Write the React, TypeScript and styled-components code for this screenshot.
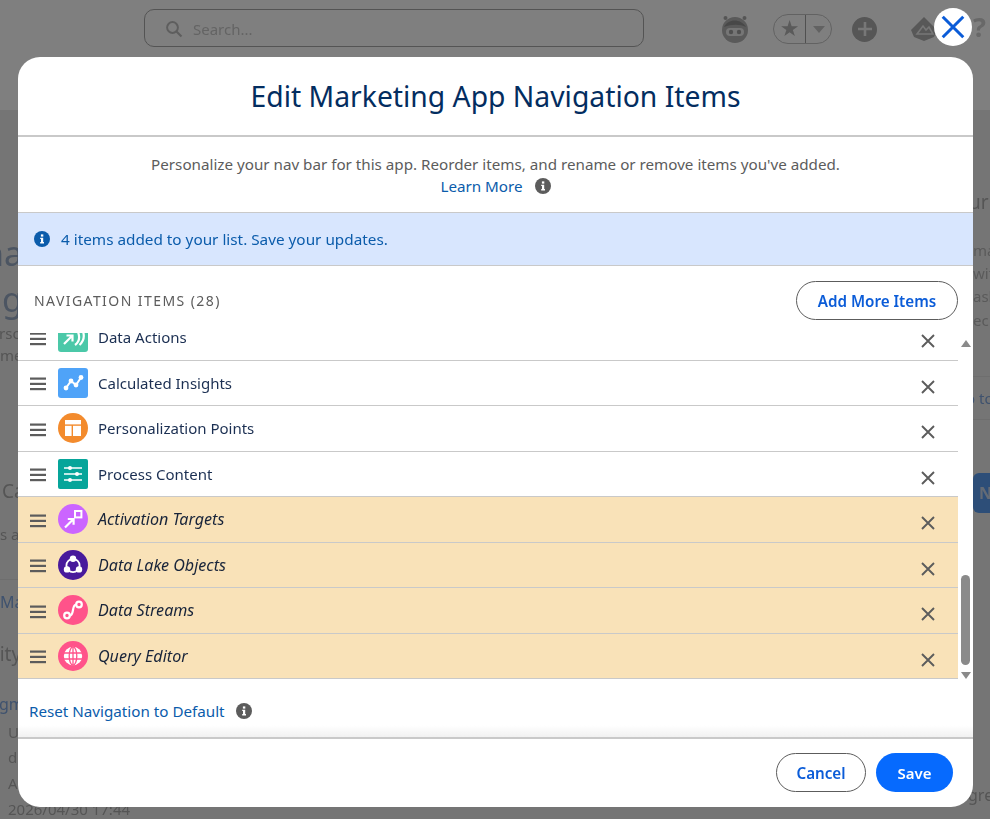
import React from "react";
import styled, { createGlobalStyle } from "styled-components";

const FONT = `"Noto Sans", "Open Sans", "Liberation Sans", sans-serif`;

const GlobalStyle = createGlobalStyle`
  html, body {
    margin: 0;
    padding: 0;
    height: 100%;
    overflow: hidden;
    font-family: ${FONT};
  }
  * { box-sizing: border-box; }
`;

const Hamburger = () => (
  <svg width="16" height="14" viewBox="0 0 16 14">
    <rect y="0.5" width="16" height="2.2" fill="currentColor" />
    <rect y="5.8" width="16" height="2.2" fill="currentColor" />
    <rect y="11" width="16" height="2.2" fill="currentColor" />
  </svg>
);

const Cross = ({ size = 14, color = "currentColor", weight = 1.9 }: { size?: number; color?: string; weight?: number }) => (
  <svg width={size} height={size} viewBox="0 0 14 14">
    <path d="M1 1 L13 13 M13 1 L1 13" stroke={color} strokeWidth={weight} fill="none" />
  </svg>
);

const InfoDot = ({ color }: { color: string }) => (
  <svg width="16" height="16" viewBox="0 0 16 16">
    <circle cx="8" cy="8" r="8" fill={color} />
    <rect x="6.9" y="3.4" width="2.4" height="2.2" fill="#fff" />
    <path d="M6.2 6.7 H9.2 V11 H10 V12.4 H6.2 V11 H7 V8 H6.2 Z" fill="#fff" />
  </svg>
);

const DataActionsIcon = () => (
  <svg width="30" height="30" viewBox="0 0 30 30">
    <rect width="30" height="30" rx="3" fill="#4bc8a8" />
    <path d="M6 22 L14 14 M8.5 13.5 H14.5 V19.5" stroke="#fff" strokeWidth="2.2" fill="none" />
    <path d="M17 23 C21 20 22 15 20 10 M21.5 23 C26 19 26.5 13 24.5 8" stroke="#fff" strokeWidth="2.2" fill="none" />
  </svg>
);

const InsightsIcon = () => (
  <svg width="30" height="30" viewBox="0 0 30 30">
    <rect width="30" height="30" rx="3" fill="#4fa3f8" />
    <path d="M8 20 L13 13 L18 17 L23 9.5" stroke="#fff" strokeWidth="2" fill="none" />
    <circle cx="8" cy="20" r="2.4" fill="#fff" />
    <circle cx="13" cy="13" r="2.4" fill="#fff" />
    <circle cx="18" cy="17" r="2.4" fill="#fff" />
    <circle cx="23" cy="9.5" r="2.4" fill="#fff" />
  </svg>
);

const PersonalizationIcon = () => (
  <svg width="30" height="30" viewBox="0 0 30 30">
    <circle cx="15" cy="15" r="15" fill="#f38b2d" />
    <rect x="7" y="7" width="16" height="4.4" fill="#fff" />
    <rect x="7" y="12.8" width="6.6" height="10.2" fill="#fff" />
    <rect x="15" y="12.8" width="8" height="10.2" fill="#fff" />
  </svg>
);

const ProcessIcon = () => (
  <svg width="30" height="30" viewBox="0 0 30 30">
    <rect width="30" height="30" rx="2" fill="#06a59a" />
    <path d="M6 9 H24 M6 15 H24 M6 21 H24" stroke="#fff" strokeWidth="1.5" />
    <circle cx="12" cy="9" r="2" fill="#fff" />
    <circle cx="19" cy="15" r="2" fill="#fff" />
    <circle cx="12" cy="21" r="2" fill="#fff" />
  </svg>
);

const ActivationIcon = () => (
  <svg width="30" height="30" viewBox="0 0 30 30">
    <circle cx="15" cy="15" r="15" fill="#cb65ff" />
    <rect x="17" y="7" width="6.4" height="6.4" fill="none" stroke="#fff" strokeWidth="2" />
    <path d="M7 23.5 L15 15.5 M9.8 15 H15.6 V20.8" stroke="#fff" strokeWidth="2.2" fill="none" />
  </svg>
);

const DataLakeIcon = () => (
  <svg width="30" height="30" viewBox="0 0 30 30">
    <circle cx="15" cy="15" r="15" fill="#481a9c" />
    <circle cx="15" cy="15.5" r="6.6" fill="none" stroke="#fff" strokeWidth="1.8" />
    <circle cx="15" cy="8.8" r="3.2" fill="#fff" />
    <circle cx="9" cy="19.4" r="3.2" fill="#fff" />
    <circle cx="21" cy="19.4" r="3.2" fill="#fff" />
  </svg>
);

const StreamsIcon = () => (
  <svg width="30" height="30" viewBox="0 0 30 30">
    <circle cx="15" cy="15" r="15" fill="#ff538a" />
    <circle cx="9" cy="20.5" r="2.8" fill="none" stroke="#fff" strokeWidth="2.2" />
    <circle cx="21" cy="9.5" r="2.8" fill="none" stroke="#fff" strokeWidth="2.2" />
    <path d="M11.8 20.5 C16.5 20.5 13.5 9.5 18.2 9.5" stroke="#fff" strokeWidth="2.2" fill="none" />
  </svg>
);

const QueryIcon = () => (
  <svg width="30" height="30" viewBox="0 0 30 30">
    <circle cx="15" cy="15" r="15" fill="#ff538a" />
    <circle cx="15" cy="15" r="9.2" fill="#fff" />
    <ellipse cx="15" cy="15" rx="3.8" ry="9.2" fill="none" stroke="#ff538a" strokeWidth="1.3" />
    <path d="M15 5.8 V24.2 M6 12 H24 M6 18 H24" stroke="#ff538a" strokeWidth="1.3" />
  </svg>
);

const navItems = [
  { label: "Data Actions", icon: <DataActionsIcon />, added: false },
  { label: "Calculated Insights", icon: <InsightsIcon />, added: false },
  { label: "Personalization Points", icon: <PersonalizationIcon />, added: false },
  { label: "Process Content", icon: <ProcessIcon />, added: false },
  { label: "Activation Targets", icon: <ActivationIcon />, added: true },
  { label: "Data Lake Objects", icon: <DataLakeIcon />, added: true },
  { label: "Data Streams", icon: <StreamsIcon />, added: true },
  { label: "Query Editor", icon: <QueryIcon />, added: true },
];

const leftRows = [
  { text: "na", top: 120, h: 46, size: 34, x: -17, color: "#98aac4" },
  { text: "ng", top: 0, h: 46, size: 34, x: -19, color: "#98aac4" },
  { text: "rso", top: 0, h: 21, size: 15, x: -1, color: "#aaa" },
  { text: "me", top: 0, h: 24, size: 15, x: 0, color: "#aaa" },
  { text: "Ca", top: 108, h: 32, size: 19, x: 2, color: "#aaa" },
  { text: "s a", top: 15, h: 24, size: 15, x: 0, color: "#aaa" },
  { text: "Ma", top: 33, h: 44, size: 16, x: 0, color: "#7ea4dc", line: true },
  { text: "vity", top: 15, h: 32, size: 19, x: -10, color: "#aaa" },
  { text: "gm", top: 22, h: 24, size: 16, x: -1, color: "#7ea4dc" },
  { text: "U", top: 4, h: 24, size: 15, x: 8, color: "#aaa" },
  { text: "d", top: 0, h: 26, size: 15, x: 8, color: "#aaa" },
  { text: "A", top: 0, h: 26, size: 15, x: 8, color: "#aaa" },
  { text: "2026/04/30 17:44", top: 0, h: 26, size: 15, x: 8, color: "#aaa" },
];

const rightRows = [
  { text: "sur", top: 76, h: 32, size: 19, x: 0, color: "#aaa" },
  { text: "mat", top: 20, h: 23, size: 15, x: 13, color: "#b4b4b4" },
  { text: "with", top: 0, h: 23, size: 15, x: 13, color: "#b4b4b4" },
  { text: "ash", top: 0, h: 23, size: 15, x: 13, color: "#b4b4b4" },
  { text: "eci", top: 0, h: 26, size: 15, x: 13, color: "#b4b4b4" },
  { text: "o to", top: 43, h: 43, size: 15, x: 6, color: "#7ea4dc", line: true },
  { text: "", top: 0, h: 54, size: 15, x: 0, color: "#b4b4b4", line: true },
];

const App = () => {
  return (
    <>
      <GlobalStyle />
      <Page>
        <TopBar>
          <SearchBox>
            <svg width="18" height="18" viewBox="0 0 18 18">
              <circle cx="7.5" cy="7.5" r="5.4" fill="none" stroke="#bdbdbd" strokeWidth="2" />
              <path d="M11.5 11.5 L16.5 16.5" stroke="#bdbdbd" strokeWidth="2.2" />
            </svg>
            <span>Search...</span>
          </SearchBox>
          <Actions>
            <svg width="30" height="28" viewBox="0 0 30 28">
              <circle cx="5.5" cy="3" r="2" fill="#ababab" />
              <circle cx="24.5" cy="3" r="2" fill="#ababab" />
              <circle cx="15" cy="15" r="13" fill="#b4b4b4" />
              <path d="M4 12 C8 4 20 3 26 12 C20 9 12 9 4 12 Z" fill="#909090" />
              <rect x="6" y="13" width="18" height="8" rx="4" fill="#ececec" />
              <circle cx="11" cy="17" r="2.2" fill="#a0a0a0" />
              <circle cx="19" cy="17" r="2.2" fill="#a0a0a0" />
            </svg>
            <Favorites>
              <FavStar>★</FavStar>
              <FavCaret />
            </Favorites>
            <PlusCircle>
              <svg width="14" height="14" viewBox="0 0 14 14">
                <path d="M7 0 V14 M0 7 H14" stroke="#eee" strokeWidth="2.6" />
              </svg>
            </PlusCircle>
            <svg width="28" height="24" viewBox="0 0 28 24">
              <path d="M14 0 L27 13 L24 20 L14 24 L4 20 L1 13 Z" fill="#b0b0b0" />
              <path d="M7 17 L13 9 L16 13 L19 10 L23 17 Z" fill="none" stroke="#eee" strokeWidth="1.6" />
            </svg>
            <HelpMark>?</HelpMark>
          </Actions>
        </TopBar>
        <Content>
          <Column>
            {leftRows.map((r) => (
              <BackRow key={r.text} $top={r.top} $h={r.h} $size={r.size} $x={r.x} $color={r.color} $line={r.line}>
                {r.text}
              </BackRow>
            ))}
          </Column>
          <Column>
            {rightRows.map((r, i) => (
              <BackRow key={i} $top={r.top} $h={r.h} $size={r.size} $x={r.x} $color={r.color} $line={r.line}>
                {r.text}
              </BackRow>
            ))}
            <BackButton>New</BackButton>
            <BackRow $top={270} $h={24} $size={16} $x={8} $color="#aaa">gre</BackRow>
          </Column>
        </Content>
      </Page>
      <Backdrop />
      <Modal>
        <CloseButton aria-label="Close">
          <Cross size={24} color="#0b5cd8" weight={1.75} />
        </CloseButton>
        <ModalHeader>
          <Title>Edit Marketing App Navigation Items</Title>
        </ModalHeader>
        <Intro>
          <div>Personalize your nav bar for this app. Reorder items, and rename or remove items you've added.</div>
          <LearnRow>
            <TextLink>Learn More</TextLink>
            <InfoDot color="#5c5c5c" />
          </LearnRow>
        </Intro>
        <Notice>
          <InfoDot color="#0b5cab" />
          <span>4 items added to your list. Save your updates.</span>
        </Notice>
        <SectionHead>
          <SectionLabel>NAVIGATION ITEMS (28)</SectionLabel>
          <OutlineButton $width={162}>Add More Items</OutlineButton>
        </SectionHead>
        <ListFrame>
          <ListViewport>
            {navItems.map((item) => (
              <NavRow key={item.label} $added={item.added}>
                <Handle><Hamburger /></Handle>
                {item.icon}
                <NavLabel $added={item.added}>{item.label}</NavLabel>
                <RemoveButton aria-label="Remove"><Cross /></RemoveButton>
              </NavRow>
            ))}
          </ListViewport>
          <ScrollTrack>
            <ArrowUp />
            <ScrollThumb />
            <ArrowDown />
          </ScrollTrack>
        </ListFrame>
        <ResetRow>
          <TextLink>Reset Navigation to Default</TextLink>
          <InfoDot color="#5c5c5c" />
        </ResetRow>
        <Footer>
          <OutlineButton $width={90}>Cancel</OutlineButton>
          <PrimaryButton>Save</PrimaryButton>
        </Footer>
      </Modal>
    </>
  );
};
export default App;

const Page = styled.div`
  width: 990px;
  height: 819px;
  overflow: hidden;
  background: #ebebeb;
  filter: blur(0.6px);
`;

const TopBar = styled.div`
  height: 110px;
  padding: 9px 0 0 144px;
  background: #fff;
  display: flex;
  align-items: flex-start;
`;

const SearchBox = styled.div`
  width: 500px;
  height: 38px;
  border: 1px solid #a8a8a8;
  border-radius: 10px;
  display: flex;
  align-items: center;
  gap: 10px;
  padding: 1px 0 0 20px;
  font-size: 15px;
  color: #c8c8c8;
`;

const Actions = styled.div`
  margin-left: 76px;
  height: 40px;
  display: flex;
  align-items: center;
  gap: 23px;
`;

const Favorites = styled.div`
  width: 59px;
  height: 30px;
  border: 1px solid #c4c4c4;
  border-radius: 15px;
  display: flex;
  align-items: center;
  margin-right: -3px;
`;

const FavStar = styled.span`
  width: 31px;
  text-align: center;
  font-size: 22px;
  line-height: 28px;
  color: #b4b4b4;
  font-family: "DejaVu Sans", sans-serif;
`;

const FavCaret = styled.span`
  flex: 1;
  height: 28px;
  border-left: 1px solid #a0a0a0;
  display: flex;
  align-items: center;
  justify-content: center;
  &::after {
    content: "";
    border-left: 6px solid transparent;
    border-right: 6px solid transparent;
    border-top: 7px solid #c4c4c4;
  }
`;

const PlusCircle = styled.span`
  width: 25px;
  height: 25px;
  border-radius: 50%;
  background: #acacac;
  display: flex;
  align-items: center;
  justify-content: center;
  margin-right: 10px;
`;

const HelpMark = styled.span`
  font-size: 27px;
  line-height: 40px;
  font-weight: 700;
  color: #d0d0d0;
  margin: -4px 0 0 12px;
`;

const Content = styled.div`
  display: grid;
  grid-template-columns: 960px 30px;
  height: 709px;
`;

const Column = styled.div`
  display: flex;
  flex-direction: column;
  min-width: 0;
`;

const BackRow = styled.div<{ $top: number; $h: number; $size: number; $x: number; $color: string; $line?: boolean }>`
  margin-top: ${(p) => p.$top}px;
  height: ${(p) => p.$h}px;
  flex-shrink: 0;
  display: flex;
  align-items: center;
  padding-left: ${(p) => Math.max(p.$x, 0)}px;
  margin-left: ${(p) => Math.min(p.$x, 0)}px;
  font-size: ${(p) => p.$size}px;
  color: ${(p) => p.$color};
  white-space: nowrap;
  border-top: ${(p) => (p.$line ? "1px solid #dcdcdc" : "0")};
`;

const BackButton = styled.div`
  margin: 0 0 0 13px;
  height: 40px;
  width: 60px;
  background: #5a9cf0;
  border-radius: 6px 0 0 6px;
  color: #c8d6ea;
  font-weight: 700;
  font-size: 16px;
  line-height: 40px;
  padding-left: 6px;
`;

const Backdrop = styled.div`
  position: fixed;
  inset: 0;
  background: rgba(0, 0, 0, 0.5);
`;

const Modal = styled.div`
  position: fixed;
  left: 18px;
  top: 57px;
  width: 955px;
  height: 750px;
  background: #fff;
  border-radius: 22px;
  display: flex;
  flex-direction: column;
`;

const CloseButton = styled.button`
  position: absolute;
  top: -49px;
  right: 1px;
  width: 38px;
  height: 38px;
  padding: 0;
  border: 0;
  border-radius: 50%;
  background: #fff;
  display: flex;
  align-items: center;
  justify-content: center;
`;

const ModalHeader = styled.div`
  height: 80px;
  flex-shrink: 0;
  border-bottom: 2px solid #c9c9c9;
  display: flex;
  align-items: center;
  justify-content: center;
`;

const Title = styled.h1`
  margin: 0;
  font-size: 28.3px;
  font-weight: 400;
  color: #032d60;
`;

const Intro = styled.div`
  height: 75px;
  flex-shrink: 0;
  padding-top: 16px;
  text-align: center;
  font-size: 15.2px;
  line-height: 22px;
  color: #5c5c5c;
`;

const LearnRow = styled.div`
  display: flex;
  justify-content: center;
  align-items: center;
  gap: 12px;
`;

const TextLink = styled.a`
  font-size: 15.2px;
  color: #0b5cab;
`;

const Notice = styled.div`
  height: 54px;
  flex-shrink: 0;
  background: #d8e6fe;
  border-top: 1px solid #c9c9c9;
  border-bottom: 1px solid #c9c9c9;
  display: flex;
  align-items: center;
  gap: 11px;
  padding-left: 16px;
  font-size: 15.3px;
  color: #0b5cab;
`;

const SectionHead = styled.div`
  height: 67px;
  flex-shrink: 0;
  display: flex;
  justify-content: space-between;
  align-items: flex-start;
  padding: 15px 15px 0 16px;
`;

const SectionLabel = styled.div`
  font-size: 14px;
  letter-spacing: 1.43px;
  line-height: 39px;
  color: #5c5c5c;
`;

const OutlineButton = styled.button<{ $width: number }>`
  width: ${(p) => p.$width}px;
  height: 39px;
  border: 1px solid #5c5c5c;
  border-radius: 20px;
  background: #fff;
  color: #0b5cd8;
  font-family: ${FONT};
  font-size: 15.2px;
  font-weight: 600;
  padding: 0;
`;

const PrimaryButton = styled.button`
  width: 77px;
  height: 39px;
  border: 0;
  border-radius: 20px;
  background: #066afe;
  color: #fff;
  font-family: ${FONT};
  font-size: 15px;
  font-weight: 600;
  padding: 0;
`;

const ListFrame = styled.div`
  height: 346px;
  flex-shrink: 0;
  display: flex;
`;

const ListViewport = styled.div`
  flex: 1;
  min-width: 0;
  overflow: hidden;
  display: flex;
  flex-direction: column;
  justify-content: flex-end;
`;

const NavRow = styled.div<{ $added: boolean }>`
  height: 45.5px;
  flex-shrink: 0;
  display: flex;
  align-items: center;
  padding: 0 23px 0 12px;
  border-bottom: 1px solid #c9c9c9;
  background: ${(p) => (p.$added ? "#f9e2b8" : "#fff")};
  color: #5c5c5c;
`;

const Handle = styled.span`
  display: flex;
  margin: 3px 12px 0 0;
`;

const NavLabel = styled.span<{ $added: boolean }>`
  margin-left: 10px;
  font-size: ${(p) => (p.$added ? "16.1px" : "15px")};
  font-style: ${(p) => (p.$added ? "italic" : "normal")};
  color: ${(p) => (p.$added ? "#18243a" : "#1b2f52")};
`;

const RemoveButton = styled.button`
  margin-left: auto;
  padding: 0;
  border: 0;
  background: none;
  color: #5c5c5c;
  display: flex;
  position: relative;
  top: 4px;
`;

const ScrollTrack = styled.div`
  width: 15px;
  display: flex;
  flex-direction: column;
  align-items: center;
  padding-top: 7px;
`;

const ArrowUp = styled.span`
  border-left: 5px solid transparent;
  border-right: 5px solid transparent;
  border-bottom: 7px solid #8a8a8a;
  margin-bottom: auto;
`;

const ArrowDown = styled.span`
  margin-top: 7px;
  border-left: 5px solid transparent;
  border-right: 5px solid transparent;
  border-top: 7px solid #8a8a8a;
`;

const ScrollThumb = styled.span`
  width: 9px;
  height: 90px;
  border-radius: 5px;
  background: #8a8a8a;
`;

const ResetRow = styled.div`
  flex: 1;
  display: flex;
  align-items: center;
  gap: 11px;
  padding: 6px 0 0 11px;
  background: linear-gradient(to bottom, #fff 80%, #f1f1f1 100%);
`;

const Footer = styled.div`
  height: 70px;
  flex-shrink: 0;
  border-top: 2px solid #c9c9c9;
  display: flex;
  justify-content: flex-end;
  align-items: flex-start;
  gap: 10px;
  padding: 14px 20px 0 0;
`;
